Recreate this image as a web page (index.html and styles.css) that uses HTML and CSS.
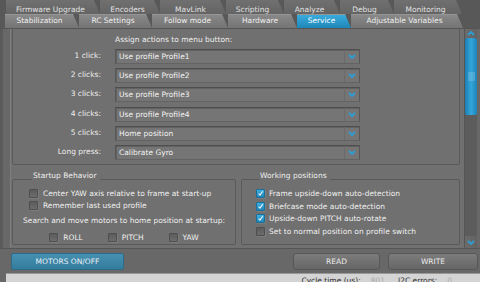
FILE: index.html
```html
<!DOCTYPE html>
<html lang="en">
  <head>
    <meta charset="UTF-8" />
    <title>Service</title>
    <link rel="stylesheet" href="styles.css">
  </head>
  <body>
    <div class="tabs">
      <div class="tab-row back">
        <span class="tab w94">Firmware Upgrade</span>
        <span class="tab w60">Encoders</span>
        <span class="tab w66">MavLink</span>
        <span class="tab w58">Scripting</span>
        <span class="tab w56">Analyze</span>
        <span class="tab w54">Debug</span>
        <span class="tab w68">Monitoring</span>
      </div>
      <div class="tab-row front">
        <span class="tab w74">Stabilization</span>
        <span class="tab w73">RC Settings</span>
        <span class="tab w76">Follow mode</span>
        <span class="tab w69">Hardware</span>
        <span class="tab w54 active">Service</span>
        <span class="tab w112">Adjustable Variables</span>
      </div>
    </div>

    <div class="main">
      <div class="scroll">
        <div class="content">
          <fieldset class="group menu-group">
            <legend>Menu button</legend>
            <div class="assign">Assign actions to menu button:</div>
            <div class="menu-grid">
              <label>1 click:</label>
              <div class="combo"><span>Use profile Profile1</span><span class="arrow"><svg viewBox="0 0 8 5"><path d="M1 1l3 3 3-3"/></svg></span></div>
              <label>2 clicks:</label>
              <div class="combo"><span>Use profile Profile2</span><span class="arrow"><svg viewBox="0 0 8 5"><path d="M1 1l3 3 3-3"/></svg></span></div>
              <label>3 clicks:</label>
              <div class="combo"><span>Use profile Profile3</span><span class="arrow"><svg viewBox="0 0 8 5"><path d="M1 1l3 3 3-3"/></svg></span></div>
              <label>4 clicks:</label>
              <div class="combo"><span>Use profile Profile4</span><span class="arrow"><svg viewBox="0 0 8 5"><path d="M1 1l3 3 3-3"/></svg></span></div>
              <label>5 clicks:</label>
              <div class="combo"><span>Home position</span><span class="arrow"><svg viewBox="0 0 8 5"><path d="M1 1l3 3 3-3"/></svg></span></div>
              <label>Long press:</label>
              <div class="combo"><span>Calibrate Gyro</span><span class="arrow"><svg viewBox="0 0 8 5"><path d="M1 1l3 3 3-3"/></svg></span></div>
            </div>
          </fieldset>

          <div class="lower">
            <fieldset class="group startup">
              <legend>Startup Behavior</legend>
              <div class="check"><span class="box"></span>Center YAW axis relative to frame at start-up</div>
              <div class="check"><span class="box"></span>Remember last used profile</div>
              <div class="search">Search and move motors to home position at startup:</div>
              <div class="axes">
                <div class="check"><span class="box"></span>ROLL</div>
                <div class="check"><span class="box"></span>PITCH</div>
                <div class="check"><span class="box"></span>YAW</div>
              </div>
            </fieldset>

            <fieldset class="group working">
              <legend>Working positions</legend>
              <div class="check"><span class="box on"><svg viewBox="0 0 9 9"><path d="M2 4.6l1.9 2 3.4-5"/></svg></span>Frame upside-down auto-detection</div>
              <div class="check"><span class="box on"><svg viewBox="0 0 9 9"><path d="M2 4.6l1.9 2 3.4-5"/></svg></span>Briefcase mode auto-detection</div>
              <div class="check"><span class="box on"><svg viewBox="0 0 9 9"><path d="M2 4.6l1.9 2 3.4-5"/></svg></span>Upside-down PITCH auto-rotate</div>
              <div class="check"><span class="box"></span>Set to normal position on profile switch</div>
            </fieldset>
          </div>
        </div>
      </div>

      <div class="scrollbar">
        <div class="sb-btn up"><svg viewBox="0 0 8 5"><path d="M1 4l3-3 3 3"/></svg></div>
        <div class="sb-thumb"><span class="grip"></span></div>
        <div class="sb-track"></div>
        <div class="sb-btn down"><svg viewBox="0 0 8 5"><path d="M1 1l3 3 3-3"/></svg></div>
      </div>
    </div>

    <div class="actions">
      <button class="btn blue">MOTORS ON/OFF</button>
      <button class="btn read">READ</button>
      <button class="btn write">WRITE</button>
    </div>

    <div class="status">
      <span>Cycle time (us):</span>
      <span class="value">801</span>
      <span>I2C errors:</span>
      <span class="value">0</span>
    </div>
  </body>
</html>
```

FILE: styles.css
```css
:root {
  --panel: #707070;
  --text: #efefef;
  --line: #5a5a5a;
  --accent: #2a9fd8;
}

* {
  margin: 0;
  padding: 0;
  box-sizing: border-box;
}

body {
  width: 480px;
  height: 282px;
  overflow: hidden;
  background: #686868;
  color: var(--text);
  font-family: "DejaVu Sans", sans-serif;
  font-size: 7.5px;
}

/* tab bar, two rows */
.tabs {
  height: 28px;
  background: #585858;
}

.tab-row {
  display: flex;
  height: 14px;
}

.tab {
  display: block;
  flex-shrink: 0;
  height: 14px;
  line-height: 14px;
  padding-right: 5px;
  text-align: center;
  white-space: nowrap;
  clip-path: polygon(0 0, calc(100% - 6px) 0, 100% 100%, 0 100%);
}

.w54 { width: 54px; }
.w56 { width: 56px; }
.w58 { width: 58px; }
.w60 { width: 60px; }
.w66 { width: 66px; }
.w68 { width: 68px; }
.w69 { width: 69px; }
.w73 { width: 73px; }
.w74 { width: 74px; }
.w76 { width: 76px; }
.w94 { width: 94px; }
.w112 { width: 112px; }

.back {
  padding-left: 6px;
}

.back .tab {
  line-height: 20px;
  overflow: hidden;
  color: #e2e2e2;
  background: linear-gradient(#707070, #646464);
}

.front {
  padding-left: 5px;
}

.front .tab {
  background: linear-gradient(#8a8a8a, #747474);
  box-shadow: inset 0 1px 0 #959595;
}

.front .tab.active {
  color: #fff;
  background: linear-gradient(#3aaee0, #1f86b8);
}

/* main scroll pane */
.main {
  display: flex;
  height: 221px;
  padding: 0 3px 0 10px;
  border-top: 1px solid #555;
  border-bottom: 1px solid #555;
  background: linear-gradient(to right, #5a5a5a 3px, #686868 3px);
}

.scroll {
  width: 454px;
  overflow: hidden;
  border-left: 1px solid #7e7e7e;
  background: var(--panel);
}

.content {
  margin-top: -7px;
  padding: 0 4px 0 1px;
}

.group {
  border: 1px solid var(--line);
  border-radius: 2px;
}

.group legend {
  margin-left: 3px;
  padding: 0 3px 6px 1px;
  line-height: 10px;
}

.menu-group {
  padding-bottom: 4px;
}

.menu-group legend {
  padding-bottom: 0;
}

.assign {
  margin: 3px 0 3.7px 102px;
  line-height: 10px;
}

.menu-grid {
  display: grid;
  grid-template-columns: 88px 245px;
  grid-auto-rows: 15px;
  column-gap: 14px;
  row-gap: 4.3px;
}

.menu-grid label {
  text-align: right;
  line-height: 13px;
}

.combo {
  display: flex;
  align-items: center;
  justify-content: space-between;
  padding-left: 3px;
  border: 1px solid #565656;
  border-top-color: #4e4e4e;
  border-bottom-color: #636363;
  background: #757575;
  box-shadow: inset 1px 1px 0 #626262;
  color: #f3f3f3;
}

.combo .arrow {
  display: flex;
  align-items: center;
  justify-content: center;
  width: 15px;
  height: 100%;
  border-left: 1px solid #6a6a6a;
}

.combo svg,
.sb-btn svg {
  width: 8px;
  height: 5px;
  fill: none;
  stroke: var(--accent);
  stroke-width: 1.8;
}

.lower {
  display: flex;
  gap: 5px;
  margin-top: 6px;
}

.startup {
  width: 224px;
  padding: 0 0 1px 16px;
}

.working {
  flex: 1;
  padding: 0 0 0 14px;
}

.check {
  display: flex;
  align-items: center;
  gap: 5px;
  height: 12px;
}

.working .check {
  height: 12.6px;
  gap: 4px;
}

.box {
  display: flex;
  flex-shrink: 0;
  align-items: center;
  justify-content: center;
  width: 9px;
  height: 9px;
  border: 1px solid #4e4e4e;
  border-radius: 1px;
  background: linear-gradient(#5c5c5c, #6c6c6c);
  box-shadow: 1px 1px 0 #7c7c7c;
}

.box.on {
  border-color: #1c6f99;
  background: linear-gradient(#3db0e2, #1f85b8);
}

.box svg {
  width: 9px;
  height: 9px;
  fill: none;
  stroke: #f4f4f4;
  stroke-width: 1.4;
}

.search {
  margin: 4px 0 0 -16px;
  height: 12px;
  line-height: 12px;
  text-align: center;
}

.axes {
  display: flex;
  justify-content: center;
  gap: 25px;
  margin: 4px 0 0 -16px;
}

/* scrollbar */
.scrollbar {
  display: flex;
  flex-direction: column;
  width: 13px;
  background: #5c5c5c;
  border-left: 1px solid #555;
}

.sb-btn {
  display: flex;
  flex-shrink: 0;
  align-items: center;
  justify-content: center;
  background: linear-gradient(to right, #6c6c6c, #626262);
}

.sb-btn.up {
  height: 9px;
}

.sb-btn.down {
  height: 12px;
}

.sb-thumb {
  display: flex;
  flex-shrink: 0;
  align-items: center;
  justify-content: center;
  height: 77px;
  border-radius: 2px;
  background: linear-gradient(to right, #1a7fb3, #35a6da 50%, #1d84b8);
}

.grip {
  width: 7px;
  height: 9px;
  background: radial-gradient(circle, rgba(255, 255, 255, 0.35) 0.6px, transparent 0.8px) 0 0 / 2px 2px;
}

.sb-track {
  flex: 1;
}

/* bottom buttons */
.actions {
  display: flex;
  gap: 8px;
  height: 24px;
  padding: 4px 2px 2px 11px;
}

.btn {
  height: 17px;
  border: 1px solid #575757;
  border-radius: 3px;
  font-family: "DejaVu Sans", sans-serif;
  font-size: 7.5px;
  color: #ececec;
  background: linear-gradient(#7c7c7c, #666);
}

.btn.blue {
  width: 113px;
  border-color: #2b6a88;
  border-radius: 2px;
  background: linear-gradient(#4690b2, #337c9c);
  color: #e8f0f4;
}

.btn.read {
  width: 87px;
  margin-left: auto;
}

.btn.write {
  width: 90px;
}

/* status bar */
.status {
  display: flex;
  justify-content: flex-end;
  height: 14px;
  margin-left: 6px;
  padding-right: 28px;
  border-top: 1px solid #999;
  background: #d4d4d4;
  color: #333;
  line-height: 14px;
}

.status .value {
  margin: 0 13px 0 10px;
  color: #aaa;
}

.status .value:last-child {
  margin-right: 0;
}
```
